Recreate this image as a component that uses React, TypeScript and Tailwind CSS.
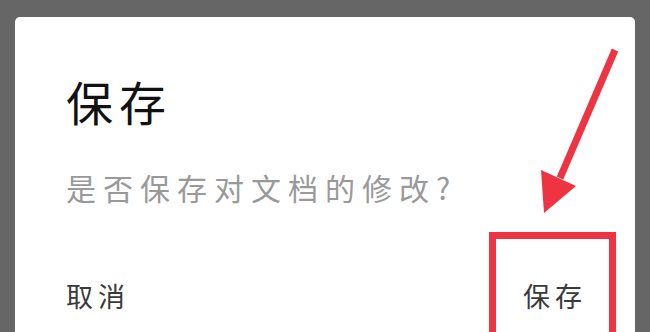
import React from 'react';

const cjk = { fontFamily: '"Noto Sans CJK SC", "Noto Sans", sans-serif' };

const Annotation = () => (
  <>
    {/* Highlight box round the save button */}
    <div className="absolute left-[489px] top-[232px] w-[127px] h-[120px] border-[7px] border-[#ee3442]" />
    {/* Pointer arrow */}
    <svg className="absolute left-0 top-0 pointer-events-none" width="650" height="332" viewBox="0 0 650 332">
      <line x1="615" y1="50" x2="560" y2="178" stroke="#ee3442" strokeWidth="7" />
      <polygon points="541,170 576,186 544,213" fill="#ee3442" />
    </svg>
  </>
);

export default function App() {
  return (
    <div className="relative w-[650px] h-[332px] overflow-hidden bg-[#666666] pt-[17px] px-[15px]" style={cjk}>
      <div className="h-full bg-white rounded-t-[5px] pt-[60px] pl-[51px] pr-[48px] flex flex-col">
        <h1 className="text-[47px] leading-none tracking-[6px] text-[#111111] font-normal">保存</h1>
        <p className="mt-[48px] text-[30px] leading-none tracking-[7px] text-[#999999]">是否保存对文档的修改?</p>
        <div className="mt-[80px] flex justify-between text-[27px] leading-none tracking-[5px] text-[#3a3a3a]">
          <span>取消</span>
          <span>保存</span>
        </div>
      </div>
      <Annotation />
    </div>
  );
}
